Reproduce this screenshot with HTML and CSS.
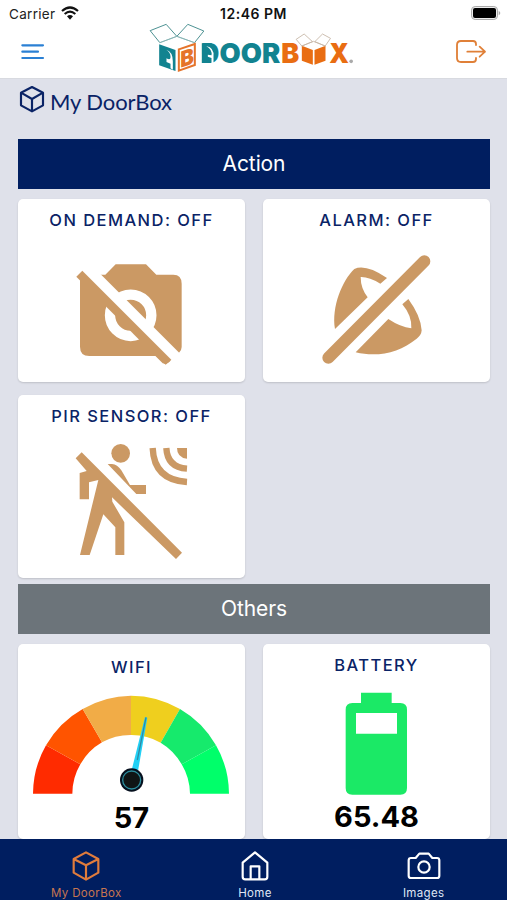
FILE: index.html
```html
<!DOCTYPE html>
<html lang="en">
<head>
    <meta charset="UTF-8">
    <meta name="viewport" content="width=device-width, initial-scale=1.0">
    <title>My DoorBox</title>
    <link rel="stylesheet" href="styles.css">
</head>
<body>
    <!-- Header -->
    <header class="header">
        <div class="statusbar">
            <div class="carrier">
                <span>Carrier</span>
                <svg width="18" height="14" viewBox="0 0 54 42">
                    <path d="M27 41L18 31Q27 23 36 31Z" fill="#111"/>
                    <path d="M11 24Q27 10 43 24M3 15Q27-6 51 15" fill="none" stroke="#111" stroke-width="6.5"/>
                </svg>
            </div>
            <span class="time">12:46 PM</span>
            <svg class="power" width="30" height="14" viewBox="0 0 90 42">
                <rect x="1.5" y="1.5" width="78" height="39" rx="11" fill="#eee" stroke="#aaa" stroke-width="3"/>
                <rect x="6" y="6" width="69" height="30" rx="6" fill="#000"/>
                <path d="M83 14Q93 21 83 28Z" fill="#aaa"/>
            </svg>
        </div>
        <div class="toolbar">
            <svg class="menu" width="24" height="18" viewBox="0 0 72 54">
                <path d="M4 7H66M4 26H51M4 45H66" stroke="#2b80d4" stroke-width="6.5" stroke-linecap="round"/>
            </svg>
            <svg class="logo" width="210" height="55" viewBox="25.5 15 630 165">
                <!-- big box -->
                <g fill="none" stroke="#4d9293" stroke-width="3">
                    <path d="M29 47L77 28L109 64L58 83Z"/>
                    <path d="M109 64L142 28L190 48L162 83Z"/>
                    <path d="M58 83L109 64L162 83" stroke="#bfd4d4" stroke-width="1.5"/>
                </g>
                <path d="M56 88L105 105V168L56 151Z" fill="#128390"/>
                <path d="M77 104Q97 110 97 139V164L90 160V146L78 141V130Q91 138 90 124Q89 110 77 104Z" fill="#fff"/>
                <path d="M115 103L163 87V150L115 167Z" fill="#fff" stroke="#e5742a" stroke-width="6"/>
                <text class="logo-b" transform="translate(119 158) skewY(-18)" textLength="41" lengthAdjust="spacingAndGlyphs">B</text>
                <!-- name -->
                <text class="logo-text teal" x="182" y="145" textLength="54" lengthAdjust="spacingAndGlyphs">D</text>
                <text class="logo-text teal" x="237" y="145" textLength="182" lengthAdjust="spacingAndGlyphs">OOR</text>
                <path d="M184 85H213Q224 94 224 116V132L204 144H184Z" fill="#128390"/>
                <path d="M197 93Q222 97 219 126V144H213V129L202 125V119L213 121Q216 104 197 93Z" fill="#fff"/>
                <text class="logo-text orange" x="422" y="145" textLength="54" lengthAdjust="spacingAndGlyphs">B</text>
                <!-- small box -->
                <path d="M484 92L517 105V149L484 137ZM522 105L555 92V137L522 149Z" fill="#e96d12"/>
                <path d="M467 73L491 57L516 80L484 93ZM523 80L546 57L570 70L554 93ZM484 93L519 79L554 93" fill="none" stroke="#c5b5a5" stroke-width="2.6"/>
                <text class="logo-text orange" x="566" y="145" textLength="59" lengthAdjust="spacingAndGlyphs">X</text>
                <circle cx="632" cy="139" r="5.5" fill="#aaa"/>
            </svg>
            <svg class="logout" width="32" height="26" viewBox="0 0 96 78" fill="none" stroke="#e08038" stroke-width="5.5" stroke-linecap="round" stroke-linejoin="round">
                <path d="M63 18V15Q63 6 54 6H18Q6 6 6 18V57Q6 69 18 69H54Q63 69 63 60V57"/>
                <path d="M37 38H90M74 23L90 38L74 53"/>
            </svg>
        </div>
    </header>

    <main class="content">
        <div class="title">
            <svg width="26" height="28" viewBox="0 0 78 84" fill="none" stroke="#0a2366" stroke-width="6.5" stroke-linejoin="round">
                <path d="M42 3L75 20V58L42 76L9 58V20ZM9 20L42 39L75 20M42 39V76"/>
            </svg>
            <h1>My DoorBox</h1>
        </div>

        <h2 class="bar">Action</h2>
        <div class="cards">
            <div class="card">
                <h3>ON DEMAND: OFF</h3>
                <svg width="228" height="120" viewBox="24 371 684 360">
                    <path d="M210 447Q210 433 224 433H286L317 402H408L439 433H490Q515 433 515 460V650Q515 660 507 667L484 688L467 703L438 677H238Q210 677 210 649Z" fill="#cb9964"/>
                    <circle cx="362" cy="555" r="62" fill="none" stroke="#fff" stroke-width="31"/>
                    <path d="M210 425L245 405L524 684L497 711Z" fill="#fff"/>
                    <path d="M217 421L484 688Q472 704 458 699L199 439Z" fill="#cb9964"/>
                </svg>
            </div>
            <div class="card">
                <h3>ALARM: OFF</h3>
                <svg width="228" height="120" viewBox="24 191 684 360">
                    <path d="M240 416C229 350 262 270 298 236Q332 220 396 263L376 280Q342 259 317 260Q317 294 338 321Z" fill="#cb9964"/>
                    <path d="M302 486L400 386Q436 410 469 414Q471 376 442 342L460 326Q497 376 500 420Q499 435 485 445C434 486 370 502 302 486Z" fill="#cb9964"/>
                    <path d="M220 502L508 213" stroke="#cb9964" stroke-width="36" stroke-linecap="round"/>
                </svg>
            </div>
            <div class="card">
                <h3>PIR SENSOR: OFF</h3>
                <svg width="228" height="120" viewBox="24 195 684 360">
                    <g fill="#cb9964">
                        <circle cx="332" cy="205" r="28"/>
                        <path d="M215 202L516 503L498 522L306 337L307 350L343 412V510H316V427L280 388L239 510H210L265 285L237 292V343H209V264L230 258L197 220Z"/>
                        <path d="M293 237H306Q322 238 334 256L360 300H408V327H379Z"/>
                        <path d="M501 189H531V221Q501 218 501 189Z"/>
                    </g>
                    <path d="M469 189Q472 247 531 251M428 189Q432 285 531 291" fill="none" stroke="#cb9964" stroke-width="19"/>
                </svg>
            </div>
        </div>

        <h2 class="bar grey">Others</h2>
        <div class="cards others">
            <div class="card wifi">
                <h3>WIFI</h3>
                <svg width="228" height="106" viewBox="24 351 684 318">
                    <path d="M69 656A294 294 0 0 1 108 511L211 568A176 176 0 0 0 187 656Z" fill="#ff2b00"/>
                    <path d="M108 511A294 294 0 0 1 218 402L276 502A176 176 0 0 0 211 568Z" fill="#ff5400"/>
                    <path d="M218 402A294 294 0 0 1 363 362V480A176 176 0 0 0 276 502Z" fill="#f1ac47"/>
                    <path d="M363 362A294 294 0 0 1 510 402L452 503A176 176 0 0 0 363 480Z" fill="#efcf1e"/>
                    <path d="M510 402A294 294 0 0 1 618 511L515 568A176 176 0 0 0 452 503Z" fill="#16ea6c"/>
                    <path d="M618 511A294 294 0 0 1 657 656H540A176 176 0 0 0 515 568Z" fill="#00ff6a"/>
                    <path d="M405 426L412 428L384 588L365 585Z" fill="#22d0f5"/>
                    <path d="M408 427L382 555" stroke="#318ba4" stroke-width="4"/>
                    <circle cx="365" cy="615" r="35" fill="#06101e"/>
                    <circle cx="365" cy="615" r="27" fill="#101516" stroke="#2b8c9c" stroke-width="4"/>
                </svg>
                <p class="value">57</p>
            </div>
            <div class="card battery">
                <h3>BATTERY</h3>
                <svg width="228" height="106" viewBox="24 347 684 318">
                    <path d="M318 352H410V383H436Q456 383 456 403V638Q456 658 436 658H292Q272 658 272 638V403Q272 383 292 383H318ZM303 413V475H426V413Z" fill="#1be966" fill-rule="evenodd"/>
                </svg>
                <p class="value">65.48</p>
            </div>
        </div>
    </main>

    <!-- Bottom tabs -->
    <nav class="tabs">
        <a class="tab active">
            <svg width="28" height="30" viewBox="0 0 84 90">
                <path d="M42 4L79 24V65L42 86L5 65V24ZM5 24L42 43L79 24M42 43V86"/>
            </svg>
            <span>My DoorBox</span>
        </a>
        <a class="tab">
            <svg width="28" height="30" viewBox="0 0 84 90">
                <path d="M5 35L42 4L79 35V77Q79 85 71 85H13Q5 85 5 77ZM29 84V46H55V84"/>
            </svg>
            <span>Home</span>
        </a>
        <a class="tab">
            <svg width="34" height="30" viewBox="0 0 102 90">
                <path d="M12 21H26L37 8H65L76 21H90Q97 21 97 28V74Q97 81 90 81H12Q5 81 5 74V28Q5 21 12 21Z"/>
                <circle cx="51" cy="48" r="17"/>
            </svg>
            <span>Images</span>
        </a>
    </nav>
</body>
</html>
```
FILE: styles.css
```css
*{
    margin: 0px;
    padding: 0px;
    box-sizing: border-box;
}
body{
    height: 900px;
    display: flex;
    flex-direction: column;
    overflow: hidden;
    background: #dfe1ea;
    font-family: Inter, "Liberation Sans", sans-serif;
}
svg{
    display: block;
    flex-shrink: 0;
    overflow: visible;
}

/* header */
.header{
    height: 79px;
    flex-shrink: 0;
    background: #fff;
    border-bottom: 1px solid #d8dae0;
}
.statusbar{
    height: 20px;
    padding: 6px 6px 0 9px;
    display: grid;
    grid-template-columns: 1fr auto 1fr;
    font-size: 13.5px;
    line-height: 16px;
    color: #222;
}
.carrier{
    display: flex;
    gap: 6px;
    letter-spacing: 0.3px;
}
.time{
    margin-right: 3px;
    font-size: 14px;
    font-weight: 600;
    letter-spacing: 0.5px;
    color: #111;
}
.power{
    justify-self: end;
}
.toolbar{
    height: 58px;
    padding: 0 20px;
    display: grid;
    grid-template-columns: 1fr auto 1fr;
}
.menu{
    margin-top: 23px;
    margin-left: 1px;
}
.logout{
    margin-top: 19px;
    justify-self: end;
}
.logo-text{
    font-size: 82px;
    font-weight: 900;
}
.logo-b{
    font-size: 66px;
    font-weight: 900;
    fill: #e5742a;
}
.teal{
    fill: #128390;
}
.orange{
    fill: #e96d12;
}

/* content */
.content{
    height: 760px;
    padding: 0 17px 0 18px;
    overflow: hidden;
}
.title{
    height: 60px;
    padding-top: 7px;
    display: flex;
    gap: 6px;
}
.title h1{
    padding-top: 2px;
    font-family: Lato, sans-serif;
    font-size: 22px;
    font-weight: 400;
    line-height: 28px;
    letter-spacing: -0.1px;
    color: #0a2366;
}
.bar{
    height: 50px;
    background: #001e60;
    color: #fff;
    font-size: 21px;
    font-weight: 400;
    line-height: 50px;
    text-align: center;
    letter-spacing: -0.1px;
}
.grey{
    background: #6c747a;
}
.cards{
    padding: 9.5px 0 6.5px;
    display: grid;
    grid-template-columns: 227px 227px;
    justify-content: space-between;
    row-gap: 13px;
}
.card{
    height: 183px;
    background: #fff;
    border-radius: 5px;
    box-shadow: 0 1px 2px rgba(0, 0, 0, 0.15);
    display: flex;
    flex-direction: column;
    align-items: center;
}
.card h3{
    padding-top: 11px;
    font-size: 16.5px;
    font-weight: 500;
    line-height: 20px;
    letter-spacing: 1.45px;
    color: #0a2366;
}
.card svg{
    margin-top: 24px;
}
.others .card{
    height: 195px;
}
.card.wifi h3{
    padding-top: 13px;
}
.wifi svg{
    margin-top: 15px;
}
.battery svg{
    margin-top: 16px;
}
.value{
    font-size: 29px;
    font-weight: 700;
    line-height: 40px;
    color: #000;
}

/* tabs */
.tabs{
    height: 61px;
    background: #001e60;
    display: grid;
    grid-template-columns: repeat(3, 1fr);
    padding: 12px 0 0 3px;
    column-gap: 2px;
}
.tab{
    display: flex;
    flex-direction: column;
    align-items: center;
    font-size: 11.5px;
    line-height: 14px;
    letter-spacing: 0.35px;
    color: #dfe6f5;
    gap: 5px;
}
.tab svg{
    fill: none;
    stroke: #fff;
    stroke-width: 6.5;
    stroke-linejoin: round;
}
.active{
    color: #c87650;
}
.active svg{
    stroke: #e07c3c;
}
```
